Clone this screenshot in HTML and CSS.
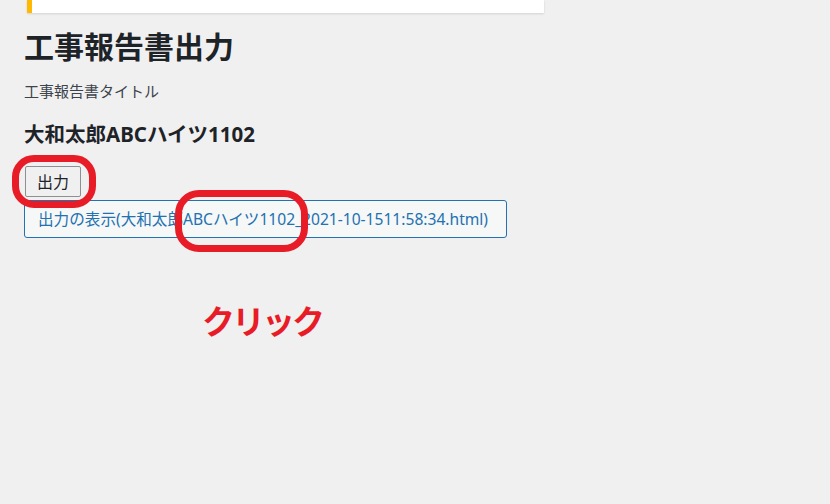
FILE: index.html
```html
<!DOCTYPE html>
<html lang="ja">
<head>
<meta charset="utf-8">
<link rel="stylesheet" href="styles.css">
</head>
<body>
<div class="wrap">
  <div class="notice"></div>
  <h1 class="title">工事報告書出力</h1>
  <p class="sub">工事報告書タイトル</p>
  <h2 class="name">大和太郎ABCハイツ1102</h2>
  <div class="actions">
    <button class="btn">出力</button>
    <a class="link-btn" href="#">出力の表示(大和太郎ABCハイツ1102_2021-10-1511:58:34.html)</a>
  </div>
  <div class="ring ring-1"></div>
  <div class="ring ring-2"></div>
  <div class="click-note">クリック</div>
</div>
</body>
</html>
```
FILE: styles.css
```css
html, body {
  margin: 0;
  padding: 0;
  background: #f0f0f1;
  width: 830px;
  height: 504px;
  overflow: hidden;
}
.wrap {
  position: relative;
  padding-left: 24px;
  font-family: "Noto Sans", "Noto Sans CJK JP", sans-serif;
  color: #3c434a;
}
.notice {
  margin-left: 3px;
  width: 512px;
  height: 13px;
  background: #fff;
  border-left: 5px solid #ffb900;
  box-shadow: 0 1px 2px rgba(0,0,0,0.12);
}
.title {
  margin: 14px 0 0 0;
  font-size: 30px;
  line-height: 40px;
  font-weight: 700;
  color: #1d2327;
}
.sub {
  margin: 13px 0 0 0;
  font-size: 15px;
  line-height: 22px;
}
.name {
  margin: 17px 0 0 0;
  font-size: 20.5px;
  line-height: 30px;
  font-weight: 700;
  color: #1d2327;
}
.actions {
  margin-top: 17px;
  display: flex;
  flex-direction: column;
  align-items: flex-start;
  gap: 3px;
}
.btn {
  font-family: inherit;
  box-sizing: border-box;
  width: 56px;
  height: 31px;
  font-size: 16px;
  line-height: 20px;
  padding: 0;
  background: #f0f0f0;
  border: 1px solid #8c8f94;
  border-radius: 2px;
  color: #1d2327;
  margin-left: 1px;
}
.link-btn {
  display: block;
  box-sizing: border-box;
  width: 483px;
  height: 38px;
  padding: 0 13px;
  line-height: 36px;
  font-size: 15.6px;
  color: #2271b1;
  text-decoration: none;
  background: #f6f7f7;
  border: 1px solid #2271b1;
  border-radius: 3px;
  white-space: nowrap;
}
.ring {
  position: absolute;
  box-sizing: border-box;
  border: 7px solid #e81c27;
  border-radius: 22px;
}
.ring-1 {
  left: 12px;
  top: 155px;
  width: 84px;
  height: 53px;
}
.ring-2 {
  left: 175px;
  top: 190px;
  width: 133px;
  height: 62px;
  border-radius: 24px;
}
.click-note {
  position: absolute;
  left: 202px;
  top: 298px;
  font-family: "Noto Sans CJK JP", sans-serif;
  font-size: 33px;
  line-height: 44px;
  letter-spacing: -3px;
  font-weight: 700;
  color: #e81c27;
}
```
